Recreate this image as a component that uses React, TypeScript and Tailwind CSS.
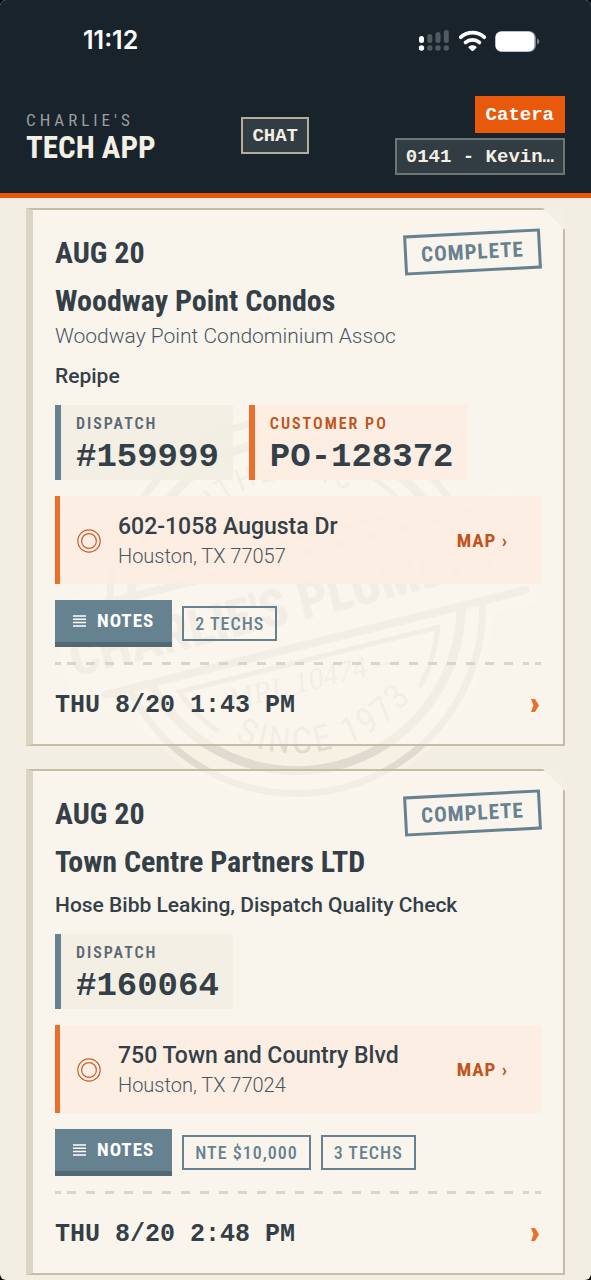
type Tag = { label: string; value: string; accent?: boolean };

type Job = {
  id: string;
  date: string;
  status: string;
  name: string;
  company?: string;
  work: string;
  tags: Tag[];
  street: string;
  city: string;
  chips: string[];
  time: string;
};

const jobs: Job[] = [
  {
    id: "159999",
    date: "AUG 20",
    status: "COMPLETE",
    name: "Woodway Point Condos",
    company: "Woodway Point Condominium Assoc",
    work: "Repipe",
    tags: [
      { label: "DISPATCH", value: "#159999" },
      { label: "CUSTOMER PO", value: "PO-128372", accent: true },
    ],
    street: "602-1058 Augusta Dr",
    city: "Houston, TX 77057",
    chips: ["2 TECHS"],
    time: "THU 8/20 1:43 PM",
  },
  {
    id: "160064",
    date: "AUG 20",
    status: "COMPLETE",
    name: "Town Centre Partners LTD",
    work: "Hose Bibb Leaking, Dispatch Quality Check",
    tags: [{ label: "DISPATCH", value: "#160064" }],
    street: "750 Town and Country Blvd",
    city: "Houston, TX 77024",
    chips: ["NTE $10,000", "3 TECHS"],
    time: "THU 8/20 2:48 PM",
  },
];

const condensed = "font-['Roboto_Condensed','Roboto',sans-serif]";
const mono = "font-['Liberation_Mono',monospace]";

function StatusBar() {
  return (
    <div className="flex h-[82px] items-center justify-between pr-[51px] pl-[83px]">
      <span className="font-['Inter',sans-serif] text-[25px] font-semibold text-white">11:12</span>
      <svg width="122" height="24" viewBox="0 0 122 24" fill="none" aria-hidden="true">
        {/* signal */}
        <rect x="1" y="7" width="5" height="7" rx="2.5" fill="#fff" />
        <rect x="9.3" y="5" width="5" height="9" rx="2.5" fill="#505a61" />
        <rect x="17.5" y="3" width="5" height="11" rx="2.5" fill="#505a61" />
        <rect x="25.8" y="1" width="5" height="13" rx="2.5" fill="#505a61" />
        <circle cx="3.5" cy="19" r="2.7" fill="#fff" />
        <circle cx="11.8" cy="19" r="2.7" fill="#505a61" />
        <circle cx="20" cy="19" r="2.7" fill="#505a61" />
        <circle cx="28.3" cy="19" r="2.7" fill="#505a61" />
        {/* wifi */}
        <path d="M42.8 8.200a17.500 17.500 0 0 1 23.400 0" stroke="#fff" strokeWidth="3.8" strokeLinecap="round" />
        <path d="M47.6 13.400a10.500 10.500 0 0 1 13.800 0" stroke="#fff" strokeWidth="3.8" strokeLinecap="round" />
        <path d="M50.8 17.600a6 6 0 0 1 7.400 0c.5.500.5 1 .1 1.400l-3 2.700a1.200 1.200 0 0 1-1.600 0l-3-2.700c-.4-.4-.4-1 .1-1.400z" fill="#fff" />
        {/* battery */}
        <rect x="77" y="2" width="41" height="21" rx="6.5" fill="#77818a" />
        <rect x="77.5" y="2.5" width="39" height="20" rx="6" fill="#fff" />
        <path d="M119 9.500c3 1 3 5 0 6z" fill="#77818a" />
      </svg>
    </div>
  );
}

function Header() {
  return (
    <header className="border-b-[5px] border-[#e9590c] bg-[#18232c]">
      <StatusBar />
      <div className="flex items-center justify-between px-[26px] pt-[14px] pb-[18px]">
        <h1 className={`${condensed} flex flex-col`}>
          <span className="text-[17px] leading-6 tracking-[4px] text-[#9b9e9d]">CHARLIE&apos;S</span>
          <span className="text-[31px] leading-8 font-bold text-[#f4efe4]">TECH APP</span>
        </h1>
        <button className={`${mono} h-[37px] border-2 border-[#b4ad9c] bg-[#323c43] px-[9px] pt-[2px] text-[19px] font-bold text-[#f4efe4]`}>
          CHAT
        </button>
        <div className={`${mono} flex flex-col items-end gap-[5px] text-[19px] font-bold`}>
          <button className="h-[37px] bg-[#e9590c] px-[11px] pt-[2px] text-white">Catera</button>
          <button className="h-[37px] border-2 border-[#6d7677] bg-[#323c43] px-[9px] pt-[2px] text-[#f4efe4]">
            0141 - Kevin…
          </button>
        </div>
      </div>
    </header>
  );
}

// Faded shop stamp behind the job cards
function Stamp() {
  return (
    <svg
      className="pointer-events-none absolute inset-x-0 top-48 mx-auto w-[480px]"
      viewBox="-240 -215 480 430"
      fill="none"
      aria-hidden="true"
    >
      <defs>
        <path id="stamp-top" d="M-126 0A126 126 0 0 1 126 0" />
        <path id="stamp-bottom" d="M-148 0A148 148 0 0 0 148 0" />
      </defs>
      <circle r="197" fill="#f7f1e3" />
      <g transform="rotate(-14)">
        <rect x="-240" y="-62" width="480" height="118" rx="10" fill="#f7f1e3" />
        <g stroke="#e0dbd1">
          <path d="M-180 -48A186 186 0 0 1 180 -48M-182 41A186 186 0 0 0 182 41" strokeWidth="7" />
          <path d="M-158 -48A165 165 0 0 1 158 -48M-160 41A165 165 0 0 0 160 41" strokeWidth="9" />
          <path d="M-228 -48H216M-206 41H226" strokeWidth="8" strokeLinecap="round" />
          <path d="M-108 -98L-134 -64H132A148 148 0 0 0 104 -106" strokeWidth="5" />
          <path d="M-106 104A148 148 0 0 1 -134 56H132A148 148 0 0 1 100 110" strokeWidth="5" />
        </g>
        <g fill="#e0dbd1" textAnchor="middle">
          <text y="16" fontSize="52" fontWeight="800" fontFamily="Roboto Condensed, sans-serif">
            CHARLIE&apos;S PLUMBING
          </text>
          <text fontSize="30" fontFamily="Roboto Condensed, sans-serif" letterSpacing="4">
            <textPath href="#stamp-top" startOffset="50%">AUTHENTIC</textPath>
          </text>
          <text y="-76" fontSize="24" fontStyle="italic" fontFamily="Liberation Serif, serif">
            — 24/7 Service —
          </text>
          <text y="86" fontSize="30" fontStyle="italic" fontFamily="Liberation Serif, serif">
            MPL 10474 —
          </text>
          <text fontSize="36" fontFamily="Roboto Condensed, sans-serif" letterSpacing="3">
            <textPath href="#stamp-bottom" startOffset="50%">SINCE 1973</textPath>
          </text>
        </g>
      </g>
    </svg>
  );
}

function TagBox({ tag }: { tag: Tag }) {
  return (
    <div
      className={
        tag.accent
          ? "h-[75px] border-l-[6px] border-[#eb6e2a] bg-[#fdece0]/80 pt-2 pr-[14px] pl-[15px]"
          : "h-[75px] border-l-[6px] border-[#668190] bg-[#f1ede1]/80 pt-2 pr-[14px] pl-[15px]"
      }
    >
      <dt
        className={`${condensed} text-base leading-[22px] font-semibold tracking-[2px] ${
          tag.accent ? "text-[#bf5420]" : "text-[#5a6973]"
        }`}
      >
        {tag.label}
      </dt>
      <dd className={`${mono} text-[34px] leading-[45px] font-bold text-[#343f48]`}>{tag.value}</dd>
    </div>
  );
}

function JobCard({ job }: { job: Job }) {
  return (
    <article className="relative border-y-2 border-r-2 border-l-[7px] border-[#c6bda8] border-l-[#dbd5c3] bg-[#fefaf3]/60 pr-[22px] pl-[22px] font-['Roboto',sans-serif] text-[#343f48]">
      {/* clipped corner */}
      <svg className="absolute -top-[2px] -right-[2px]" width="22" height="22" viewBox="0 0 22 22" aria-hidden="true">
        <path d="M0 0h22v22z" fill="#f3efe4" />
      </svg>

      <div className={`${condensed} flex h-[62px] items-end justify-between font-bold`}>
        <time className="text-[30px] leading-[38px]">{job.date}</time>
        <span className="-rotate-3 border-[3px] border-[#668190] px-[14px] text-[21px] leading-[34px] tracking-[1px] text-[#668190]">
          {job.status}
        </span>
      </div>

      <h2 className={`${condensed} mt-[10px] text-[30px] leading-[38px] font-bold`}>{job.name}</h2>
      {job.company && (
        <p className="text-[21px] leading-8 font-light text-[#4a5761]">{job.company}</p>
      )}
      <p className="mt-2 text-[21px] leading-8 font-medium">{job.work}</p>

      <dl className="mt-[13px] flex gap-4">
        {job.tags.map((tag) => (
          <TagBox key={tag.label} tag={tag} />
        ))}
      </dl>

      <a
        href="#map"
        className="mt-4 flex h-[88px] items-center border-l-[5px] border-[#eb6e2a] bg-[#fdece0]/80 pt-[2px] pr-[33px] pl-[17px]"
      >
        <svg width="24" height="24" viewBox="0 0 24 24" fill="none" stroke="#c9602f" strokeWidth="1.2" aria-hidden="true">
          <circle cx="12" cy="12" r="11.2" />
          <circle cx="12" cy="12" r="7.4" />
        </svg>
        <span className="ml-[17px] flex flex-1 flex-col">
          <span className="text-[23px] leading-[30px] font-medium">{job.street}</span>
          <span className="text-xl leading-7 font-light text-[#4a5761]">{job.city}</span>
        </span>
        <span className={`${condensed} text-[19px] font-bold tracking-[1px] text-[#bf5420]`}>MAP ›</span>
      </a>

      <div className={`${condensed} mt-4 flex items-center gap-[10px]`}>
        <button className="flex h-[47px] items-center gap-[11px] border-b-[5px] border-[#526875] bg-[#5e7b8c]/95 px-[18px] text-[19px] font-bold tracking-[1px] text-white">
          <svg width="13" height="12" viewBox="0 0 13 12" stroke="#fff" strokeWidth="1.5" aria-hidden="true">
            <path d="M0 1h13M0 4.300h13M0 7.600h13M0 10.900h13" />
          </svg>
          NOTES
        </button>
        {job.chips.map((chip) => (
          <span
            key={chip}
            className="border-2 border-[#668190] px-[11px] text-lg leading-[31px] font-medium tracking-[1px] text-[#668190]"
          >
            {chip}
          </span>
        ))}
      </div>

      {/* perforation */}
      <div className="mt-[15px] flex h-[3px] gap-[6px]">
        <span className="w-[6px] bg-[#dbd5c3]" />
        <span className="flex-1 bg-[repeating-linear-gradient(90deg,#dbd5c3_0_9px,transparent_9px_19px)]" />
        <span className="w-[6px] bg-[#dbd5c3]" />
      </div>

      <div className="flex h-[79px] items-center justify-between pt-[2px]">
        <time className={`${mono} text-[25px] font-bold`}>{job.time}</time>
        <svg className="mr-[2px]" width="8" height="13" viewBox="0 0 8 13" fill="#eb6e2a" aria-hidden="true">
          <path d="M0 0h4l4 6.500-4 6.500H0l2.500-6.500z" />
        </svg>
      </div>
    </article>
  );
}

export default function App() {
  return (
    <div className="bg-black">
      <div className="min-h-screen overflow-hidden rounded-md bg-[#f2eee3]">
        <Header />
        <main className="relative flex flex-col gap-[23px] px-[26px] pt-[10px] pb-[5px]">
          <Stamp />
          {jobs.map((job) => (
            <JobCard key={job.id} job={job} />
          ))}
        </main>
      </div>
    </div>
  );
}
